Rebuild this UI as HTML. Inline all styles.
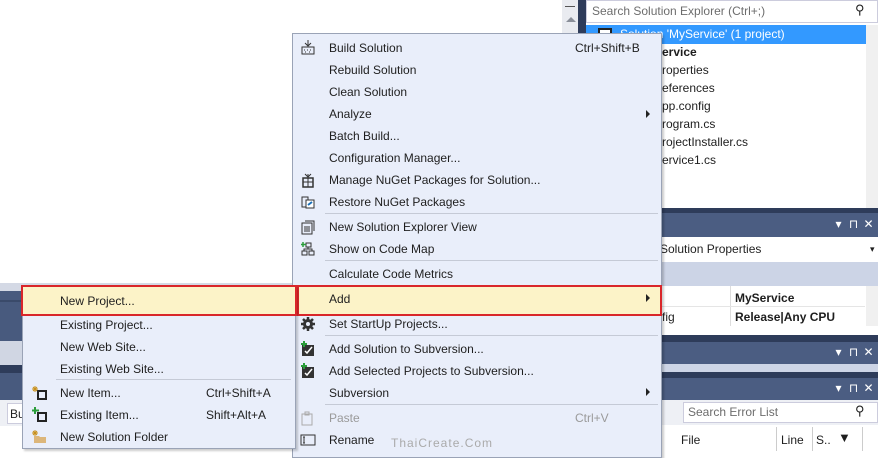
<!DOCTYPE html>
<html><head><meta charset="utf-8"><style>
*{margin:0;padding:0;box-sizing:border-box}
body{width:878px;height:451px;overflow:hidden;position:relative;background:#fff;font-family:"Segoe UI","Liberation Sans",sans-serif;font-size:12px;color:#1e1e1e}
.a{position:absolute}
.t{position:absolute;white-space:nowrap;line-height:16px}
.menu{background:#e9eefa;border:1px solid #9aa3b6;box-shadow:2px 2px 2px rgba(0,0,0,.2)}
.sep{position:absolute;height:1px;background:#c5cad6}
.arr{position:absolute;width:0;height:0;border-left:4px solid #222;border-top:4px solid transparent;border-bottom:4px solid transparent}
.title{background:#4b5d82}
.dark{background:#2e3c5a}
.ico{position:absolute;color:#fff;font-size:12px;white-space:nowrap;width:50px}
.ico span{display:inline-block;width:15px;text-align:center}
</style></head><body>

<div class="a" style="left:562px;top:0;width:16px;height:290px;background:#e9ebf0"></div>
<div class="a" style="left:565px;top:0;width:10px;height:7px;border-bottom:1px solid #555"></div>
<div class="a" style="left:566px;top:17px;width:0;height:0;border-left:5px solid transparent;border-right:5px solid transparent;border-bottom:5px solid #8a8f99"></div>
<div class="a" style="left:578px;top:0;width:8px;height:210px;background:#2e3c5a"></div>
<div class="a" style="left:586px;top:0;width:292px;height:23px;background:#fff;border:1px solid #ccd;"></div>
<div class="t" style="left:592px;top:3px;color:#6d6d6d">Search Solution Explorer (Ctrl+;)</div>
<div class="t" style="left:855px;top:2px;font-size:13px">⚲</div>
<div class="a" style="left:586px;top:24px;width:292px;height:186px;background:#fff"></div>
<div class="a" style="left:586px;top:25px;width:280px;height:19px;background:#3399ff"></div>
<div class="a" style="left:598px;top:28px;width:14px;height:12px;border:2px solid #222;background:#fff"></div>
<div class="t" style="left:620px;top:26px;color:#fff">Solution 'MyService' (1 project)</div>
<div class="a" style="left:866px;top:25px;width:12px;height:185px;background:#f0f0f0"></div>
<div class="t" style="left:662px;top:44px;font-weight:bold">ervice</div>
<div class="t" style="left:662px;top:62px">roperties</div>
<div class="t" style="left:662px;top:80px">eferences</div>
<div class="t" style="left:662px;top:98px">pp.config</div>
<div class="t" style="left:662px;top:116px">rogram.cs</div>
<div class="t" style="left:662px;top:134px">rojectInstaller.cs</div>
<div class="t" style="left:662px;top:152px">ervice1.cs</div>

<div class="a dark" style="left:560px;top:208px;width:318px;height:5px"></div>
<div class="a title" style="left:560px;top:213px;width:318px;height:24px"></div>
<div class="ico" style="left:831px;top:217px"><span>▾</span><span>⊓</span><span>✕</span></div>
<div class="a" style="left:560px;top:237px;width:318px;height:25px;background:#fff"></div>
<div class="t" style="left:660px;top:241px">Solution Properties</div>
<div class="t" style="left:870px;top:241px;font-size:9px">▾</div>
<div class="a" style="left:560px;top:262px;width:318px;height:24px;background:#ccd4e6"></div>
<div class="a" style="left:560px;top:286px;width:318px;height:40px;background:#fff"></div>
<div class="a" style="left:730px;top:286px;width:1px;height:40px;background:#ddd"></div>
<div class="a" style="left:560px;top:306px;width:305px;height:1px;background:#e5e5e5"></div>
<div class="a" style="left:866px;top:286px;width:12px;height:40px;background:#f0f0f0"></div>
<div class="t" style="left:735px;top:290px;font-weight:bold">MyService</div>
<div class="t" style="left:662px;top:309px">fig</div>
<div class="t" style="left:735px;top:309px;font-weight:bold">Release|Any CPU</div>
<div class="a dark" style="left:560px;top:335px;width:318px;height:7px"></div>
<div class="a title" style="left:560px;top:342px;width:318px;height:22px"></div>
<div class="ico" style="left:831px;top:345px"><span>▾</span><span>⊓</span><span>✕</span></div>
<div class="a" style="left:560px;top:364px;width:318px;height:8px;background:#cdd5e6"></div>
<div class="a dark" style="left:560px;top:372px;width:318px;height:6px"></div>
<div class="a title" style="left:560px;top:378px;width:318px;height:22px"></div>
<div class="ico" style="left:831px;top:381px"><span>▾</span><span>⊓</span><span>✕</span></div>
<div class="a" style="left:560px;top:400px;width:318px;height:25px;background:#eef0f5"></div>
<div class="a" style="left:683px;top:402px;width:195px;height:21px;background:#fff;border:1px solid #ccd"></div>
<div class="t" style="left:688px;top:404px;color:#6d6d6d">Search Error List</div>
<div class="t" style="left:855px;top:403px;font-size:13px">⚲</div>
<div class="a" style="left:560px;top:425px;width:318px;height:26px;background:#fff"></div>
<div class="a" style="left:776px;top:427px;width:1px;height:24px;background:#ccc"></div>
<div class="a" style="left:812px;top:427px;width:1px;height:24px;background:#ccc"></div>
<div class="a" style="left:862px;top:427px;width:1px;height:24px;background:#ccc"></div>
<div class="t" style="left:681px;top:432px">File</div>
<div class="t" style="left:781px;top:432px">Line</div>
<div class="t" style="left:816px;top:432px">S..</div>
<div class="t" style="left:838px;top:430px;font-size:13px">▼</div>

<div class="a" style="left:0;top:283px;width:300px;height:8px;background:#d4d9e5"></div>
<div class="a" style="left:0;top:291px;width:300px;height:50px;background:#485a7e"></div>
<div class="a" style="left:0;top:300px;width:300px;height:2px;background:#3a4a6a"></div>
<div class="a" style="left:0;top:341px;width:300px;height:24px;background:#d0d6e3"></div>
<div class="a dark" style="left:0;top:365px;width:300px;height:8px"></div>
<div class="a" style="left:0;top:373px;width:300px;height:27px;background:#485a7e"></div>
<div class="a" style="left:0;top:400px;width:300px;height:26px;background:#eef0f5"></div>
<div class="a" style="left:7px;top:403px;width:40px;height:21px;background:#fff;border:1px solid #ccd"></div>
<div class="t" style="left:10px;top:406px">Bu</div>

<div class="a menu" style="left:292px;top:33px;width:370px;height:425px"></div>
<div class="t" style="left:329px;top:40px">Build Solution</div><div class="t" style="left:575px;top:40px">Ctrl+Shift+B</div>
<div class="t" style="left:329px;top:62px">Rebuild Solution</div>
<div class="t" style="left:329px;top:84px">Clean Solution</div>
<div class="t" style="left:329px;top:106px">Analyze</div><div class="arr" style="left:646px;top:110px"></div>
<div class="t" style="left:329px;top:128px">Batch Build...</div>
<div class="t" style="left:329px;top:150px">Configuration Manager...</div>
<div class="t" style="left:329px;top:172px">Manage NuGet Packages for Solution...</div>
<div class="t" style="left:329px;top:194px">Restore NuGet Packages</div>
<div class="sep" style="left:325px;top:213px;width:333px"></div>
<div class="t" style="left:329px;top:219px">New Solution Explorer View</div>
<div class="t" style="left:329px;top:241px">Show on Code Map</div>
<div class="sep" style="left:325px;top:260px;width:333px"></div>
<div class="t" style="left:329px;top:266px">Calculate Code Metrics</div>
<div class="a" style="left:297px;top:285px;width:365px;height:31px;border:2px solid #d9262a;background:#fcf3c8"></div>
<div class="t" style="left:329px;top:291px">Add</div><div class="arr" style="left:646px;top:294px"></div>
<div class="t" style="left:329px;top:316px">Set StartUp Projects...</div>
<div class="sep" style="left:325px;top:335px;width:333px"></div>
<div class="t" style="left:329px;top:341px">Add Solution to Subversion...</div>
<div class="t" style="left:329px;top:363px">Add Selected Projects to Subversion...</div>
<div class="t" style="left:329px;top:385px">Subversion</div><div class="arr" style="left:646px;top:388px"></div>
<div class="sep" style="left:325px;top:404px;width:333px"></div>
<div class="t" style="left:329px;top:410px;color:#9a9a9a">Paste</div><div class="t" style="left:575px;top:410px;color:#9a9a9a">Ctrl+V</div>
<div class="t" style="left:329px;top:432px">Rename</div>
<div class="t" style="left:391px;top:435px;color:#aaa;letter-spacing:1px">ThaiCreate.Com</div>
<svg class="a" style="left:300px;top:39px" width="16" height="16"><rect x="2" y="8" width="12" height="7" fill="none" stroke="#333"/><path d="M8 1v6M5 4l3 3 3-3" stroke="#333" fill="none"/><path d="M4 11h1M7 11h1M10 11h1M5 13h1M9 13h1" stroke="#333"/></svg>
<svg class="a" style="left:300px;top:172px" width="16" height="16"><rect x="3" y="6" width="10" height="9" fill="none" stroke="#333" stroke-width="1.5"/><path d="M8 2v13M3 10h10M5 2l3 3 3-3" stroke="#333" fill="none"/></svg>
<svg class="a" style="left:300px;top:194px" width="16" height="16"><path d="M2 3h6v10H2z" fill="none" stroke="#333"/><path d="M6 6h8v8H6z" fill="#fff" stroke="#333"/><path d="M8 11l4-3" stroke="#1a6fb8" stroke-width="2"/></svg>
<svg class="a" style="left:300px;top:219px" width="16" height="16"><rect x="2" y="4" width="10" height="11" fill="none" stroke="#333"/><path d="M5 2h9v10" fill="none" stroke="#333"/><path d="M4 8h6M4 10h6M4 12h6" stroke="#333"/></svg>
<svg class="a" style="left:300px;top:241px" width="16" height="16"><rect x="6" y="2" width="5" height="4" fill="none" stroke="#333"/><rect x="2" y="10" width="5" height="4" fill="none" stroke="#333"/><rect x="9" y="10" width="5" height="4" fill="none" stroke="#333"/><path d="M8 6v2H4v2M8 8h4v2" stroke="#333" fill="none"/><path d="M3 1v5M1 3.5h5" stroke="#2a9d3a" stroke-width="1.5"/></svg>
<svg class="a" style="left:300px;top:316px" width="16" height="16"><circle cx="8" cy="8" r="5" fill="#333"/><path d="M8 1v14M1 8h14M3 3l10 10M13 3L3 13" stroke="#333" stroke-width="2.5"/><circle cx="8" cy="8" r="2" fill="#e9eefa"/></svg>
<svg class="a" style="left:300px;top:341px" width="16" height="16"><rect x="2" y="4" width="12" height="11" fill="#333"/><path d="M5 10l2 2 5-6" stroke="#fff" stroke-width="1.5" fill="none"/><path d="M4 0v6M1 3h6" stroke="#2a9d3a" stroke-width="2"/></svg>
<svg class="a" style="left:300px;top:363px" width="16" height="16"><rect x="2" y="4" width="12" height="11" fill="#333"/><path d="M5 10l2 2 5-6" stroke="#fff" stroke-width="1.5" fill="none"/><path d="M4 0v6M1 3h6" stroke="#2a9d3a" stroke-width="2"/></svg>
<svg class="a" style="left:300px;top:410px" width="16" height="16"><rect x="2" y="4" width="10" height="11" fill="none" stroke="#aaa"/><rect x="5" y="2" width="4" height="3" fill="none" stroke="#aaa"/></svg>
<svg class="a" style="left:300px;top:434px" width="16" height="12"><rect x="1" y="1" width="14" height="10" fill="none" stroke="#333"/><path d="M4 3v6M3 3h2M3 9h2" stroke="#333"/></svg>

<div class="a menu" style="left:22px;top:286px;width:274px;height:163px"></div>
<div class="a" style="left:21px;top:285px;width:276px;height:31px;border:2px solid #d9262a;background:#fcf3c8"></div>
<div class="t" style="left:60px;top:293px">New Project...</div>
<div class="t" style="left:60px;top:317px">Existing Project...</div>
<div class="t" style="left:60px;top:339px">New Web Site...</div>
<div class="t" style="left:60px;top:361px">Existing Web Site...</div>
<div class="sep" style="left:56px;top:379px;width:235px"></div>
<div class="t" style="left:60px;top:385px">New Item...</div><div class="t" style="left:206px;top:385px">Ctrl+Shift+A</div>
<div class="t" style="left:60px;top:407px">Existing Item...</div><div class="t" style="left:206px;top:407px">Shift+Alt+A</div>
<div class="t" style="left:60px;top:429px">New Solution Folder</div>
<svg class="a" style="left:32px;top:385px" width="16" height="16"><rect x="6" y="6" width="8" height="8" fill="none" stroke="#222" stroke-width="2"/><path d="M3 1v6M0 4h6M1 2l4 4M5 2l-4 4" stroke="#c8901a"/></svg>
<svg class="a" style="left:32px;top:407px" width="16" height="16"><rect x="6" y="6" width="8" height="8" fill="none" stroke="#222" stroke-width="2"/><path d="M3 0v7M0 3.5h7" stroke="#2a9d3a" stroke-width="2"/></svg>
<svg class="a" style="left:32px;top:429px" width="16" height="16"><path d="M2 7h5l1 1h6v6H2z" fill="#dcb67a"/><path d="M3 1v6M0 4h6M1 2l4 4M5 2l-4 4" stroke="#c8901a"/></svg>
</body></html>
